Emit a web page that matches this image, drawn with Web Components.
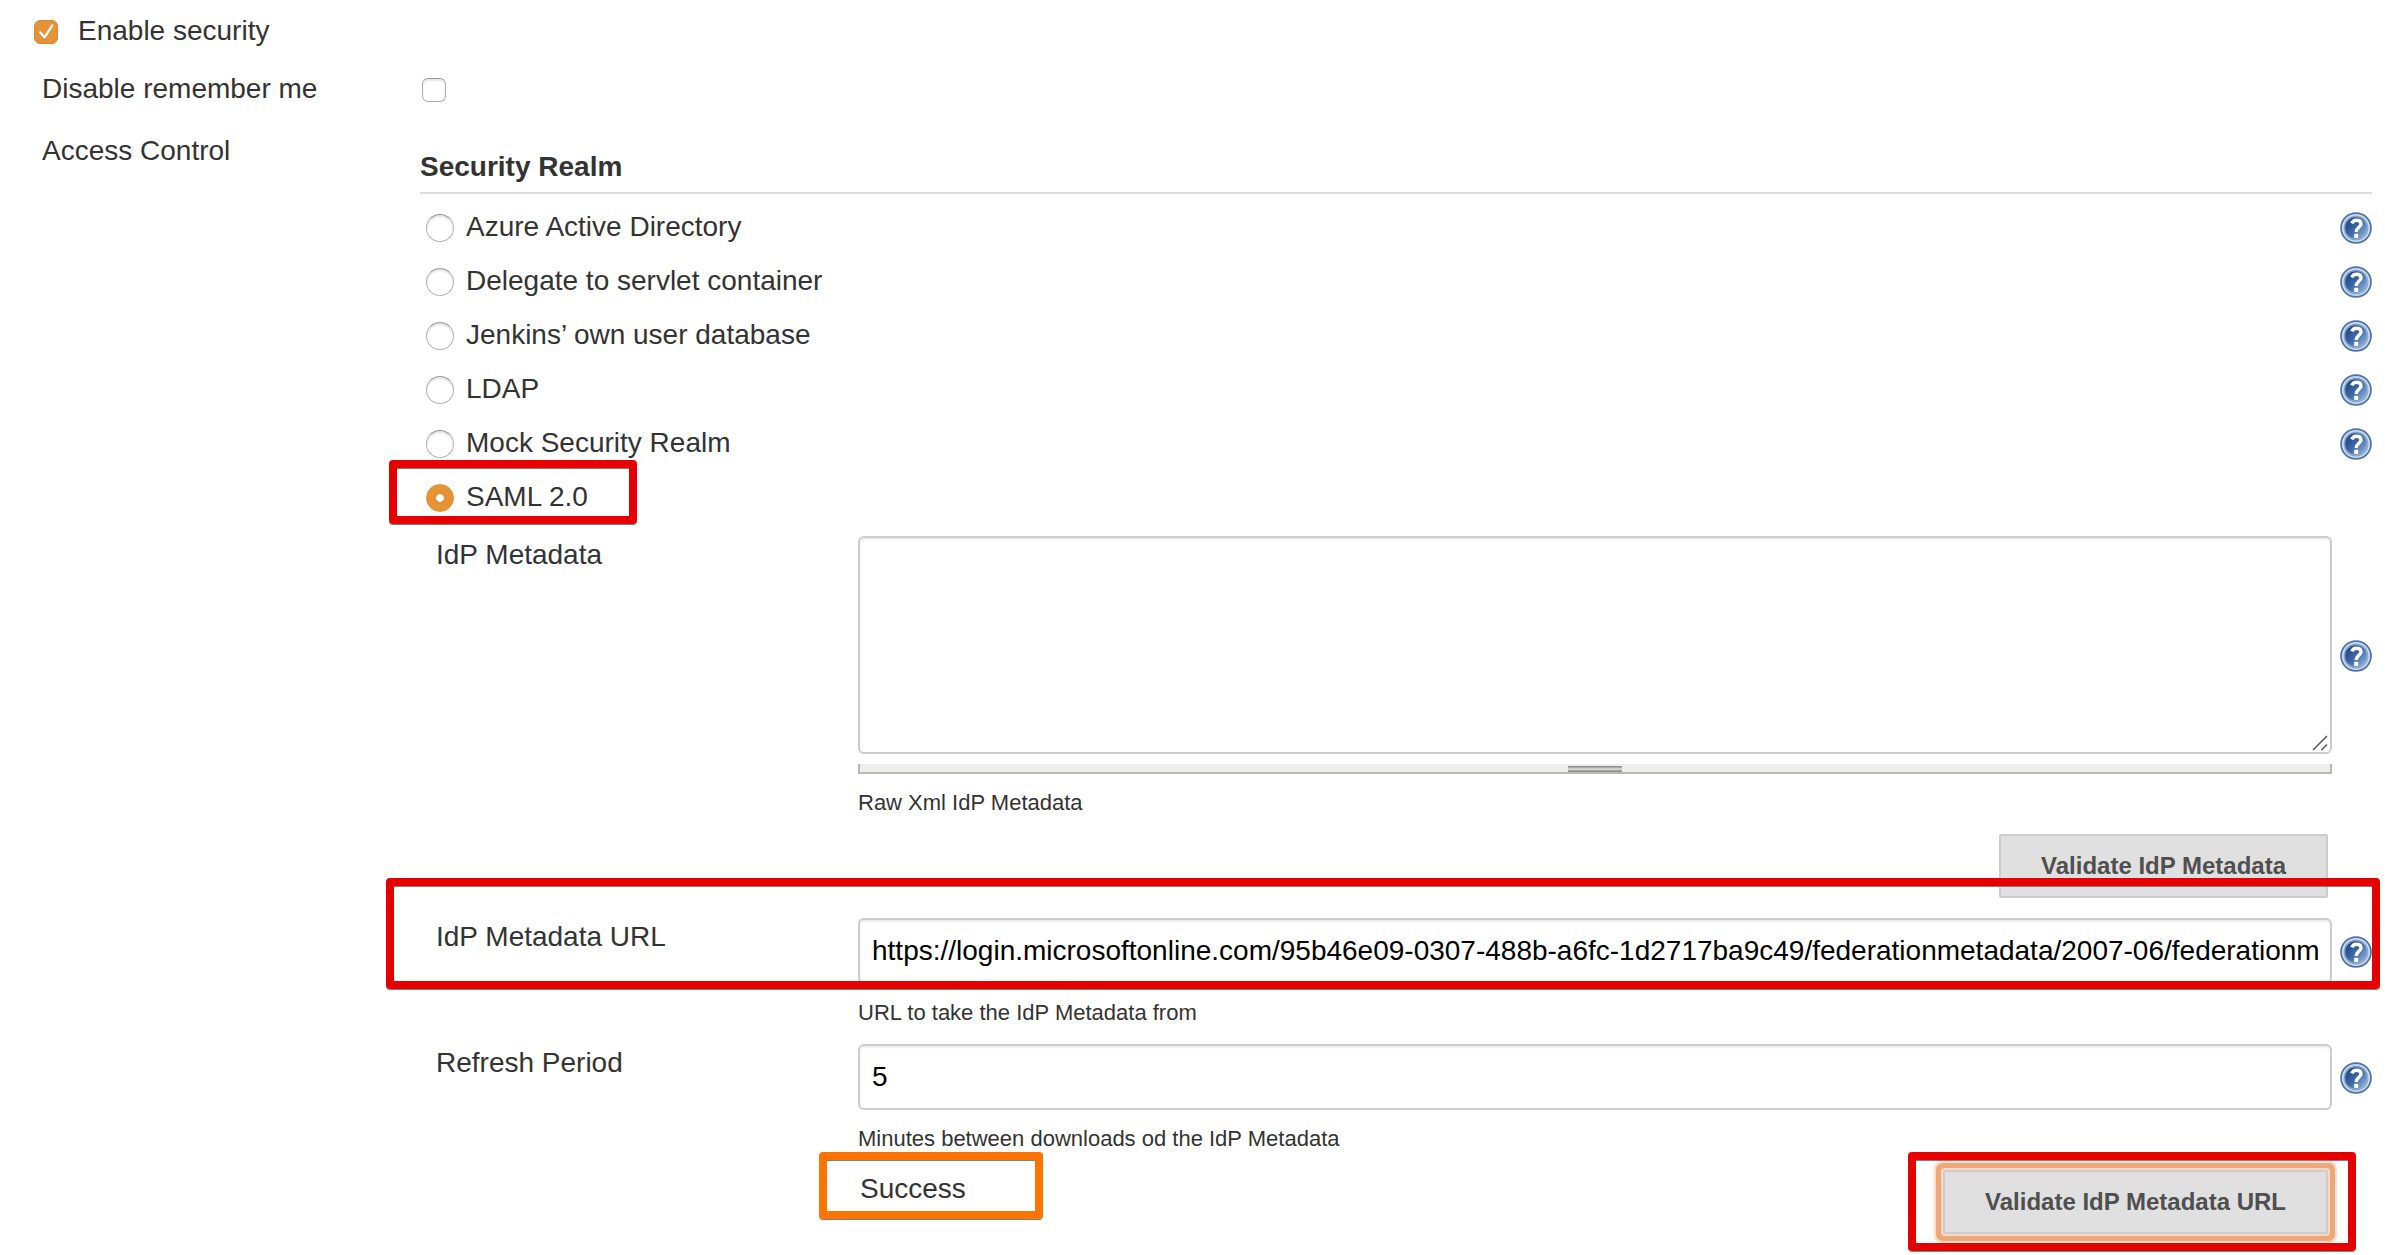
<!DOCTYPE html>
<html lang="en">
<head>
<meta charset="utf-8">
<title>Configure Global Security</title>
<style>
  body {
    margin: 0;
    background: #fff;
    color: #333;
    font: 28px/32px "Liberation Sans", Arial, Helvetica, sans-serif;
  }
</style>
</head>
<body>
<security-page></security-page>

<template id="help-link">
  <style>
    :host { display: block; flex: none; width: 32px; height: 32px; }
    a, svg { display: block; width: 32px; height: 32px; }
  </style>
  <a href="#" aria-label="Help">
    <svg viewBox="0 0 32 32" aria-hidden="true">
      <defs>
        <linearGradient id="disc" x1="0.1" y1="0.2" x2="0.9" y2="0.9">
          <stop offset="0" stop-color="#1f4a88"/>
          <stop offset="0.45" stop-color="#3d68a4"/>
          <stop offset="1" stop-color="#8fb0d8"/>
        </linearGradient>
      </defs>
      <circle cx="16" cy="16" r="15.8" fill="#4a74ad"/>
      <circle cx="16" cy="16" r="13.2" fill="#6f92c0" stroke="#ccd9eb" stroke-width="1.8"/>
      <circle cx="16" cy="16" r="11.4" fill="url(#disc)" stroke="#a9bfdc" stroke-width="0.8"/>
      <path d="M11.800 11.400C12.600 9.200 14.200 8.200 16.500 8.200c2.700 0 4.500 1.400 4.500 3.700 0 3.300-4.800 3.700-4.800 8" fill="none" stroke="#fff" stroke-width="3.400"/>
      <rect x="14.200" y="21.800" width="4" height="4.200" rx="0.800" fill="#fff"/>
    </svg>
  </a>
</template>

<template id="callout-frame">
  <style>
    :host {
      display: block;
      position: absolute;
      z-index: 1;
      box-sizing: border-box;
      border: 8px solid var(--callout-color, #e60000);
      border-radius: 4px;
      box-shadow: 0 1px 0 #808080, inset 0 1px 0 #808080;
      pointer-events: none;
    }
  </style>
</template>

<template id="tick-option">
  <style>
    :host { display: block; }
    label { display: flex; align-items: center; gap: 20px; min-height: 32px; }
    .box { display: grid; flex: none; width: 24px; height: 24px; margin-top: 2px; }
    input, svg { grid-area: 1 / 1; width: 24px; height: 24px; }
    input {
      appearance: none; box-sizing: border-box; margin: 0;
      border: 1px solid #b0b0b0; border-top-color: #989898; border-radius: 6px;
      background: #fff; box-shadow: inset 0 2px 2px #e6e6e6;
    }
    input:checked { border-color: #dc8a33; background: #e69336; box-shadow: none; }
    svg { display: none; pointer-events: none; }
    input:checked + svg { display: block; }
  </style>
  <label>
    <span class="box">
      <input type="checkbox">
      <svg viewBox="0 0 24 24" aria-hidden="true">
        <path d="M6.2 13.4l4.3 5.1L18.2 6.6" fill="none" stroke="#b06c1d" stroke-opacity=".45" stroke-width="2.4" stroke-linecap="round" stroke-linejoin="round"/>
        <path d="M6.2 12.4l4.3 5.1L18.2 5.6" fill="none" stroke="#fff" stroke-width="2.4" stroke-linecap="round" stroke-linejoin="round"/>
      </svg>
    </span>
    <slot></slot>
  </label>
</template>

<template id="realm-option">
  <style>
    :host { display: flex; align-items: center; justify-content: space-between; height: 54px; padding-left: 6px; position: relative; }
    label { display: flex; align-items: center; gap: 12px; }
    span { padding-bottom: 2px; }
    input {
      appearance: none; box-sizing: border-box; flex: none; margin: 0; width: 28px; height: 28px;
      border: 1px solid #b4b4b4; border-top-color: #999; border-radius: 50%;
      background: #fff; box-shadow: inset 0 2px 2px #e4e4e4;
    }
    input:checked {
      border-color: #e69336; box-shadow: none;
      background: radial-gradient(circle, #fff 3px, #d5832a 5px, #e69336 6px);
    }
  </style>
  <label><input type="radio" name="realm"><span><slot></slot></span></label>
  <help-link></help-link>
  <slot name="callout"></slot>
</template>

<template id="setting-field">
  <style>
    :host {
      display: grid; grid-template-columns: 422px minmax(0, 1fr) 32px;
      position: relative;
    }
    label { padding-top: 3px; }
    .control { margin-right: 8px; position: relative; }
    help-link { align-self: center; margin-top: 2px; }
    .hint { grid-column: 2; margin-top: 16px; font-size: 22px; line-height: 26px; }
    input, textarea {
      display: block; box-sizing: border-box; width: 100%; margin: 0; padding: 0 8px 0 12px;
      border: 2px solid #ccc; border-radius: 6px; background: #fff; color: #000;
      font: inherit; box-shadow: inset 0 2px 2px #eee; outline: 0;
    }
    input { height: 66px; }
    textarea { height: 218px; resize: none; }
    .corner { position: absolute; right: 4px; top: 199px; width: 16px; height: 16px; }
    .grip {
      display: flex; justify-content: center; box-sizing: border-box; height: 10px; margin-top: 10px;
      padding-top: 2px; border: solid #babab2; border-width: 0 2px 2px; background: #eee;
    }
    .grip::before {
      content: ""; width: 54px; height: 6px;
      background: linear-gradient(#8c8c88 0 1px, #aaa 1px 2px, #d0d0d0 2px 4px, #aaa 4px 5px, #8c8c88 5px 6px);
    }
  </style>
  <label for="field"></label>
  <div class="control"></div>
  <help-link></help-link>
  <div class="hint"><slot></slot></div>
  <slot name="callout"></slot>
</template>

<template id="validate-row">
  <style>
    :host { display: flex; justify-content: space-between; padding: 0 44px 2px 424px; }
    .status { padding-top: 3px; position: relative; }
    .action { position: relative; }
    button {
      display: block; box-sizing: border-box; height: 64px; margin: 0; padding: 0 40px;
      border: 2px solid #ccc; border-radius: 2px; background: #e0e0e0; color: #4f4f4f;
      font: bold 24px/28px "Liberation Sans", Arial, Helvetica, sans-serif;
    }
    :host([highlighted]) button {
      box-shadow: 0 0 0 2px #f7d9c3, 0 0 0 7px #eca878, 0 0 0 9px #f9dfcc;
    }
  </style>
  <div class="status" role="status"><slot name="status"></slot></div>
  <div class="action"><button type="button"><slot></slot></button><slot name="callout"></slot></div>
</template>

<template id="security-page">
  <style>
    :host { display: block; padding: 15px 13px 18px 34px; }
    .settings { display: grid; grid-template-columns: 378px minmax(0, 1fr); row-gap: 30px; padding: 26px 0 0 8px; }
    .remember { padding-left: 2px; }
    .realm { padding-top: 16px; }
    h2 { margin: 0 0 7px; padding-bottom: 9px; border-bottom: 2px solid #ddd; font-size: 28px; line-height: 32px; }
    .fields { display: flex; flex-direction: column; gap: 18px; padding: 11px 0 0 16px; }
    .pick { left: -31px; top: -11px; width: 248px; height: 64px; }
    .url { inset: -40px -8px 37px -50px; }
    .result { --callout-color: #ff7300; left: -41px; top: -18px; width: 224px; height: 67px; }
    .submit { inset: -18px -28px -17px -35px; }
  </style>
  <tick-option checked>Enable security</tick-option>
  <div class="settings">
    <div>Disable remember me</div>
    <tick-option class="remember" name="Disable remember me"></tick-option>
    <div>Access Control</div>
    <section class="realm">
      <h2>Security Realm</h2>
      <div role="radiogroup" aria-label="Security Realm">
        <realm-option>Azure Active Directory</realm-option>
        <realm-option>Delegate to servlet container</realm-option>
        <realm-option>Jenkins’ own user database</realm-option>
        <realm-option>LDAP</realm-option>
        <realm-option>Mock Security Realm</realm-option>
        <realm-option checked nohelp>SAML 2.0<callout-frame slot="callout" class="pick"></callout-frame></realm-option>
      </div>
      <div class="fields">
        <setting-field label="IdP Metadata" multiline>Raw Xml IdP Metadata</setting-field>
        <validate-row>Validate IdP Metadata</validate-row>
        <setting-field label="IdP Metadata URL" value="https://login.microsoftonline.com/95b46e09-0307-488b-a6fc-1d2717ba9c49/federationmetadata/2007-06/federationm">URL to take the IdP Metadata from<callout-frame slot="callout" class="url"></callout-frame></setting-field>
        <setting-field label="Refresh Period" value="5">Minutes between downloads od the IdP Metadata</setting-field>
        <validate-row highlighted><span slot="status">Success<callout-frame class="result"></callout-frame></span>Validate IdP Metadata URL<callout-frame slot="callout" class="submit"></callout-frame></validate-row>
      </div>
    </section>
  </div>
</template>

<script>
  class TemplateElement extends HTMLElement {
    connectedCallback() {
      if (this.shadowRoot) return;
      const template = document.getElementById(this.localName);
      this.attachShadow({ mode: "open" }).append(template.content.cloneNode(true));
      this.ready();
    }
    ready() {}
  }

  class HelpLink extends TemplateElement {}
  class CalloutFrame extends TemplateElement {}
  class ValidateRow extends TemplateElement {}
  class SecurityPage extends TemplateElement {}

  class TickOption extends TemplateElement {
    ready() {
      const input = this.shadowRoot.querySelector("input");
      input.checked = this.hasAttribute("checked");
      if (this.hasAttribute("name")) input.setAttribute("aria-label", this.getAttribute("name"));
    }
  }

  class RealmOption extends TemplateElement {
    ready() {
      const input = this.shadowRoot.querySelector("input");
      input.checked = this.hasAttribute("checked");
      if (this.hasAttribute("nohelp")) this.shadowRoot.querySelector("help-link").remove();
      // Radios in separate shadow roots do not form a native group.
      input.addEventListener("change", () => {
        for (const option of this.parentElement.querySelectorAll("realm-option")) {
          if (option !== this) option.shadowRoot.querySelector("input").checked = false;
        }
      });
    }
  }

  class SettingField extends TemplateElement {
    ready() {
      const root = this.shadowRoot;
      root.querySelector("label").textContent = this.getAttribute("label");
      const multiline = this.hasAttribute("multiline");
      const field = document.createElement(multiline ? "textarea" : "input");
      field.id = "field";
      if (!multiline) field.type = "text";
      field.value = this.getAttribute("value") || "";
      const control = root.querySelector(".control");
      control.append(field);
      if (multiline) {
        control.insertAdjacentHTML("beforeend",
          '<svg class="corner" viewBox="0 0 16 16" aria-hidden="true"><path d="M1 15L15 1M9.500 15L15 9.500" fill="none" stroke="#555" stroke-width="1.500"/></svg><div class="grip"></div>');
      }
    }
  }

  customElements.define("help-link", HelpLink);
  customElements.define("callout-frame", CalloutFrame);
  customElements.define("tick-option", TickOption);
  customElements.define("realm-option", RealmOption);
  customElements.define("setting-field", SettingField);
  customElements.define("validate-row", ValidateRow);
  customElements.define("security-page", SecurityPage);
</script>
</body>
</html>
